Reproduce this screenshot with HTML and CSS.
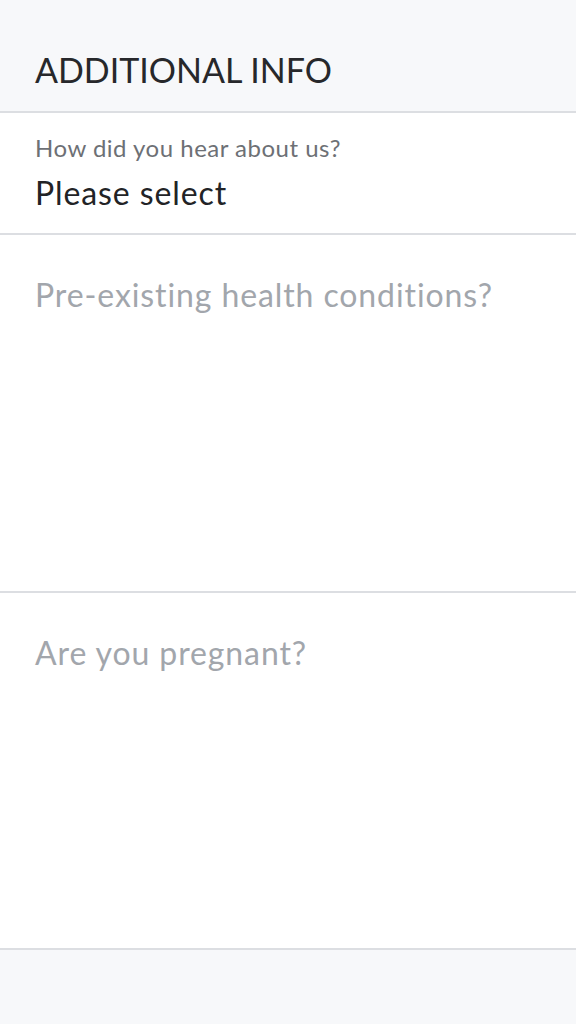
FILE: index.html
```html
<!DOCTYPE html>
<html>
<head>
<meta charset="utf-8">
<link rel="stylesheet" href="styles.css">
</head>
<body>
<div class="page">
  <header class="header"><h1 class="title">ADDITIONAL INFO</h1></header>
  <div class="field select-field">
    <div class="label">How did you hear about us?</div>
    <div class="value">Please select</div>
  </div>
  <div class="field area-field">
    <div class="placeholder">Pre-existing health conditions?</div>
  </div>
  <div class="field area-field">
    <div class="placeholder">Are you pregnant?</div>
  </div>
  <div class="footer"></div>
</div>
</body>
</html>
```

FILE: styles.css
```css
* { box-sizing: border-box; }
html, body { margin: 0; padding: 0; }
body {
  font-family: Lato, "Open Sans", sans-serif;
  font-variant-ligatures: none;
  background: #f7f8fa;
  width: 576px;
  height: 1024px;
  overflow: hidden;
}
.page { display: flex; flex-direction: column; height: 1024px; }
.header {
  height: 113px;
  background: #f7f8fa;
  border-bottom: 2px solid #dcdee2;
  padding: 50px 35px 0;
}
.title {
  margin: 0;
  font-size: 34px;
  font-weight: 400;
  line-height: 40px;
  color: #27282b;
}
.field {
  background: #fff;
  border-bottom: 2px solid #dcdee2;
  padding: 0 35px;
}
.select-field { height: 122px; padding-top: 21px; }
.label { font-size: 24px; line-height: 28px; letter-spacing: 0.5px; color: #6d7075; }
.value { font-size: 32px; line-height: 40px; letter-spacing: 0.9px; color: #222326; margin-top: 11px; }
.area-field { height: 358px; padding-top: 40px; }
.area-field + .area-field { height: 357px; }
.placeholder { font-size: 32px; line-height: 40px; letter-spacing: 0.9px; color: #a2a6ac; }
.footer { flex: 1; background: #f7f8fa; }
```
